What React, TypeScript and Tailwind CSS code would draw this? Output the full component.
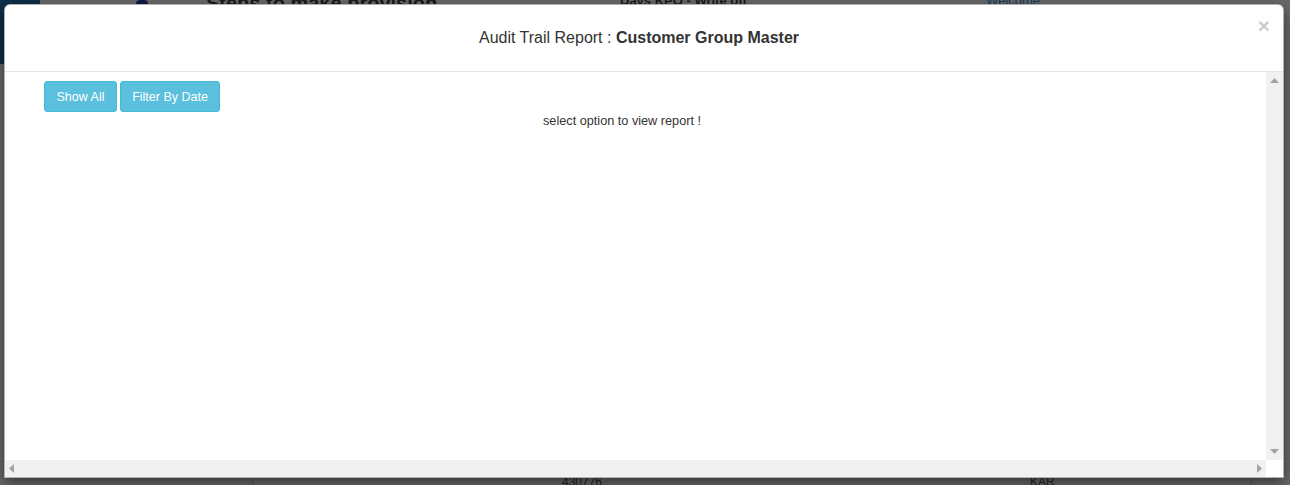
import React from 'react';

const font = { fontFamily: '"Liberation Sans", Arial, sans-serif' };

const Backdrop: React.FC = () => (
  <div className="absolute inset-0 bg-[#6a6a6a] overflow-hidden">
    <div className="absolute left-0 top-0 w-[40px] h-[64px] bg-[#0d2f4a]" />
    <div className="absolute left-[136px] top-0 w-[12px] h-[8px] rounded-full bg-[#101a4a]" />
    <div className="absolute left-[206px] -top-[12px] text-[20px] font-bold text-[#1a1a1a]">Steps to make provision</div>
    <div className="absolute left-[620px] -top-[9px] text-[13px] font-bold text-[#1a1a1a]">Days KPO - Write off</div>
    <div className="absolute left-[986px] -top-[9px] text-[13px] text-[#173a5c]">Welcome</div>
    <div className="absolute left-[252px] top-[478px] w-[1000px] h-[7px] border-x border-[#555]" />
    <div className="absolute left-[562px] top-[473px] text-[12px] text-[#222]">430776</div>
    <div className="absolute left-[1030px] top-[473px] text-[12px] text-[#222]">KAR</div>
  </div>
);

const UpArrow = () => (
  <svg width="9" height="5" viewBox="0 0 9 5"><path d="M0 5 L4.5 0 L9 5 Z" fill="#a3a3a3" /></svg>
);
const DownArrow = () => (
  <svg width="9" height="5" viewBox="0 0 9 5"><path d="M0 0 L4.5 5 L9 0 Z" fill="#a3a3a3" /></svg>
);
const LeftArrow = () => (
  <svg width="5" height="9" viewBox="0 0 5 9"><path d="M5 0 L0 4.5 L5 9 Z" fill="#a3a3a3" /></svg>
);
const RightArrow = () => (
  <svg width="5" height="9" viewBox="0 0 5 9"><path d="M0 0 L5 4.5 L0 9 Z" fill="#a3a3a3" /></svg>
);

export default function App() {
  return (
    <div className="relative w-[1290px] h-[485px] overflow-hidden" style={font}>
      <Backdrop />
      <div className="absolute left-[4px] top-[4px] w-[1280px] h-[474px] bg-white rounded-t-[6px] border border-black/30 shadow-[0_5px_15px_rgba(0,0,0,0.5)] flex flex-col">
        <div className="relative h-[67px] shrink-0 border-b border-[#e5e5e5] flex items-center justify-center">
          <h4 className="text-[16px] text-[#333] pr-[10px] -mt-[1px]">
            Audit Trail Report : <span className="font-bold">Customer Group Master</span>
          </h4>
          <button className="absolute right-[13px] top-[10px] text-[21px] font-bold leading-none text-[#000] opacity-20">×</button>
        </div>
        <div className="flex flex-1 min-h-0">
          <div className="flex-1 flex flex-col">
            <div className="flex-1 pl-[39px] pt-[9px]">
              <div className="flex gap-[3px]">
                <button className="w-[73px] h-[31px] pt-[1px] rounded-[3px] bg-[#5bc0de] border border-[#46b8da] text-white text-[12.5px]">Show All</button>
                <button className="w-[100px] h-[31px] pt-[1px] rounded-[3px] bg-[#5bc0de] border border-[#46b8da] text-white text-[12.5px]">Filter By Date</button>
              </div>
              <div className="pr-[66px] flex justify-center text-[12.7px] text-[#333]">select option to view report !</div>
            </div>
            <div className="h-[17px] bg-[#f1f1f1] flex items-center justify-between px-[4px]">
              <LeftArrow />
              <RightArrow />
            </div>
          </div>
          <div className="w-[17px] flex flex-col">
            <div className="flex-1 bg-[#f1f1f1] flex flex-col items-center justify-between py-[6px]">
              <UpArrow />
              <DownArrow />
            </div>
            <div className="h-[17px] bg-white" />
          </div>
        </div>
      </div>
    </div>
  );
}
